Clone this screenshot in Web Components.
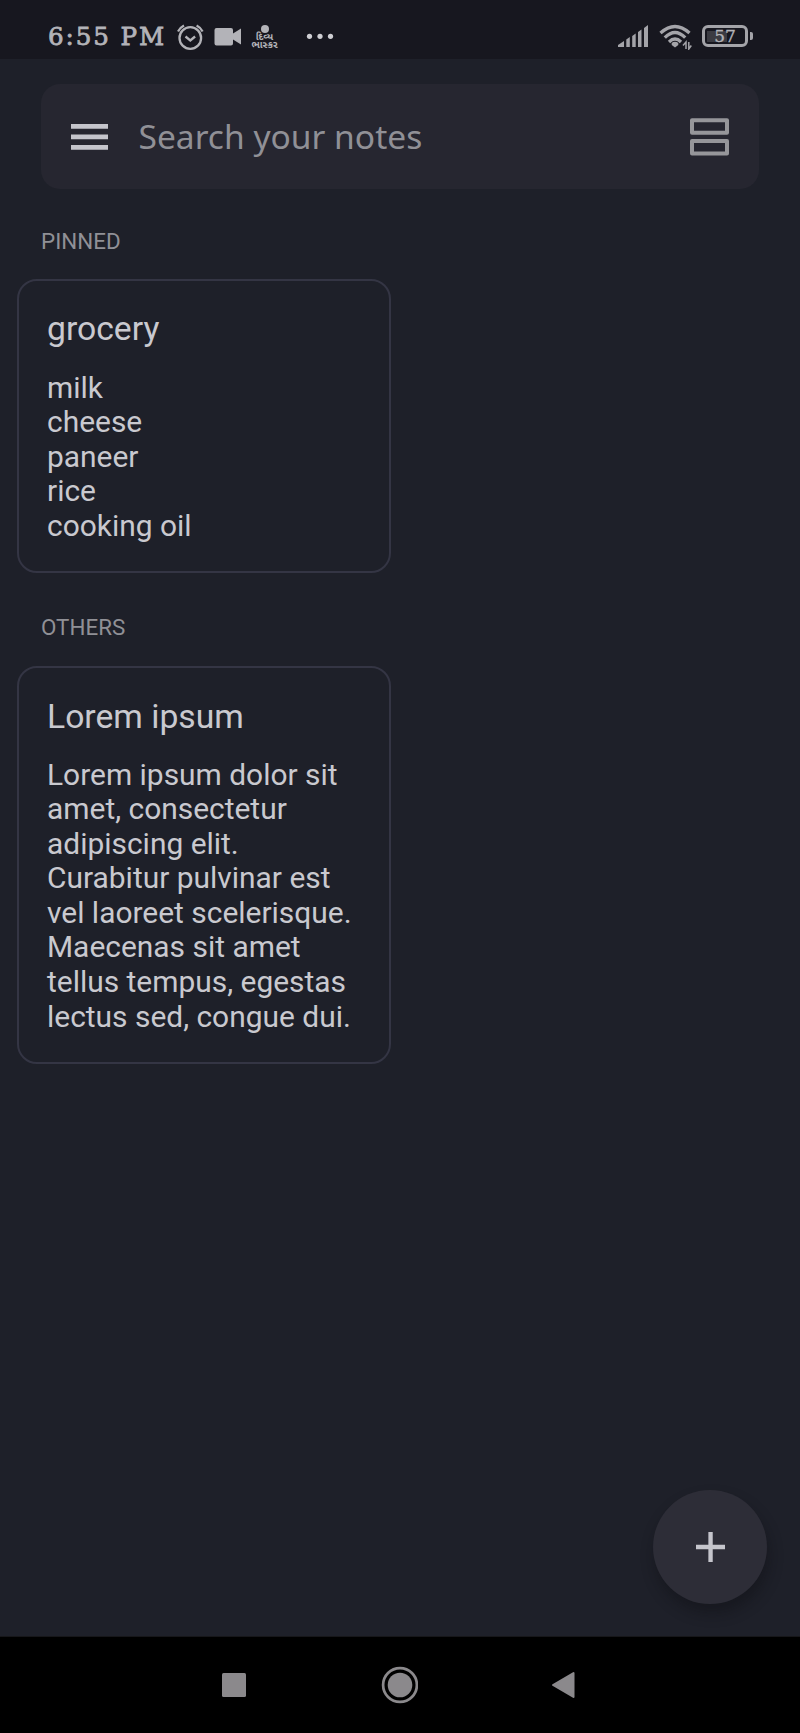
<!DOCTYPE html>
<html lang="en">
<head>
<meta charset="utf-8">
<title>Notes</title>
<style>
html,body{margin:0;background:#1e2029}
body{font-family:Roboto,sans-serif;color:#c9c9cf}
</style>
</head>
<body>
<notes-app></notes-app>
<script>
const define = (name, css, html) => customElements.define(name, class extends HTMLElement {
  constructor() {
    super();
    this.attachShadow({mode: 'open'}).innerHTML = `<style>*{box-sizing:border-box}svg{display:block;flex:none}${css}</style>${html}`;
  }
});

define('status-bar', `
:host{display:flex;box-sizing:border-box;height:59px;background:#17171f;color:#b3b3b8;padding:0 47px 0 48px;justify-content:space-between}
.side{display:flex;align-items:flex-start}
.time{font:24.600px/28px "DejaVu Serif",serif;letter-spacing:1.900px;-webkit-text-stroke:.8px currentColor;margin-top:22.500px;width:128px;white-space:nowrap}
.app{width:28px;margin:25px 0 0 8px;display:flex;flex-direction:column;align-items:center;text-align:center;font:700 9.600px/8px "Noto Sans Gujarati","Noto Sans",sans-serif;white-space:nowrap}
.app i{width:8px;height:8px;border-radius:50%;background:currentColor;flex:none;margin-bottom:1px}
.bat{display:flex;align-items:center;margin:25px 0 0 10px}
.cell{width:46px;height:22px;border:3px solid #a4a4a9;border-radius:6px;display:flex;align-items:center;justify-content:center;font:17px/16px "DejaVu Serif",serif;-webkit-text-stroke:.3px currentColor;background:linear-gradient(#3b3b42,#3b3b42) 2px 3px/20px 11px no-repeat}
.tip{width:3px;height:8px;background:#a4a4a9;margin-left:2px;border-radius:0 2px 2px 0}
`, `
<div class="side">
 <div class="time">6:55 PM</div>
 <svg style="margin:24px 0 0 1px" width="28" height="28" viewBox="0 0 28 28" fill="none" stroke="currentColor" stroke-width="2.3"><circle cx="13.3" cy="14" r="10.8"/><path d="M8.500 12.500l4.800 4 4.800-4M1 7.500Q3 3.500 7 1.500M25.600 7.500Q23.600 3.500 19.600 1.500"/></svg>
 <svg style="margin:27px 0 0 8.500px" width="29" height="20" viewBox="0 0 29 20" fill="currentColor"><path d="M2.500 1h14.500q2 0 2 2v3.500L27 1.500v16l-8-5v4q0 2-2 2H2.500q-2 0-2-2V3q0-2 2-2z"/></svg>
 <div class="app"><i></i><span>દિવ્ય<br>ભાસ્કર</span></div>
 <svg style="margin:32px 0 0 27.500px" width="30" height="9" viewBox="0 0 30 9" fill="#cfcfd3"><circle cx="3.500" cy="4.300" r="2.600"/><circle cx="14" cy="4.300" r="2.600"/><circle cx="24.500" cy="4.300" r="2.600"/></svg>
</div>
<div class="side">
 <svg style="margin-top:25px" width="31" height="23" viewBox="0 0 31 23" fill="#a4a4a9"><path d="M0 22v-2l6-4v6zM8.300 22v-7.500l3.500-2.500v10zM14.200 22v-11l3.500-2.500V22zM20 22V7l3.500-2.500V22zM26 22V3l4-3v22z"/></svg>
 <svg style="margin:24px 0 0 10px" width="33" height="26" viewBox="0 0 33 26" fill="none" stroke="#a4a4a9" stroke-width="3.300"><path d="M1.500 9Q16 -4 30.500 9M5.800 13.700Q16 3.500 26.200 13.700M10 18Q16 12 22 18"/><path fill="#a4a4a9" stroke="none" d="M16 17.800q2 0 3.300 1.300v2L16 23.600l-3.300-2.500v-2q1.300-1.300 3.300-1.300z"/><path stroke-width="1.500" d="M27 25v-7l-3 3.500M29.800 18v7l2.500-3.500"/></svg>
 <div class="bat"><div class="cell">57</div><div class="tip"></div></div>
</div>`);

define('search-bar', `
:host{display:flex;box-sizing:border-box;align-items:center;height:105px;margin:25px 41px 0;padding:0 30px;background:#262630;border-radius:19px}
.hint{flex:1;margin:-1px 0 0 30.500px;font:33.550px/46px "Noto Sans",sans-serif;color:#909096;white-space:nowrap}
`, `
<svg width="37" height="26" viewBox="0 0 37 26" fill="#c5c5cc"><path d="M0 0h37v4.800H0zM0 10.500h37v4.800H0zM0 21h37v4.800H0z"/></svg>
<div class="hint"><slot></slot></div>
<svg width="39" height="38" viewBox="0 0 39 38" fill="none" stroke="#96969a" stroke-width="4" stroke-linejoin="round"><path d="M2 2.300h35v12.500H2zM2 23h35v12.500H2z"/></svg>`);

define('section-label', `
:host{display:block;padding-left:41px;font:22.400px/26px Roboto,sans-serif;color:#909096}
`, `<slot></slot>`);

define('note-card', `
:host{display:block;box-sizing:border-box;width:374.500px;margin-left:16.500px;border:2px solid #343544;border-radius:20px;padding:var(--title-top) 20px 0 28.500px}
.title{font-size:33.700px;line-height:40px;color:#c9c9cf}
.body{font-size:29.930px;line-height:34.600px;white-space:pre-line;margin-top:calc(49.500px - var(--title-top))}
`, `<div class="title"><slot name="title"></slot></div><div class="body"><slot></slot></div>`);

define('add-button', `
:host{display:flex;align-items:center;justify-content:center;width:114px;height:114px;border-radius:50%;background:#2d2d37;box-shadow:2px 9px 14px rgba(15,15,20,.42)}
`, `<svg width="29" height="30" viewBox="0 0 30 30" preserveAspectRatio="none" fill="#c5c5cc"><path d="M12.800 0h4.500v12.800H30v4.400H17.300V30h-4.500V17.200H0v-4.400h12.800z"/></svg>`);

define('nav-bar', `
:host{display:flex;box-sizing:border-box;height:97px;background:#000;padding:0 225px 0 222px;align-items:center;justify-content:space-between;border-top:1px solid #17171a}
`, `
<svg width="24" height="24"><rect width="24" height="24" rx="1.500" fill="#8b898c"/></svg>
<svg width="38" height="38" viewBox="0 0 38 38"><circle cx="20" cy="19" r="16.900" fill="none" stroke="#8b898c" stroke-width="2.700"/><circle cx="20" cy="19" r="12.300" fill="#8b898c"/></svg>
<svg width="24" height="28" viewBox="0 0 24 28"><path d="M22.500 2v24L2 14z" fill="#8b898c" stroke="#8b898c" stroke-width="2" stroke-linejoin="round"/></svg>`);

define('notes-app', `
:host{display:flex;flex-direction:column;width:800px;height:1733px;background:#1e2029;overflow:hidden}
.l1{margin-top:39px}.l2{margin-top:41px}
.c1{margin-top:25px;height:294px;--title-top:28px}.c2{margin-top:26px;height:398px;--title-top:29px}
add-button{margin:auto 33px 32px auto;flex:none}
status-bar,search-bar,nav-bar,section-label,note-card{flex:none}
`, `
<status-bar></status-bar>
<search-bar>Search your notes</search-bar>
<section-label class="l1">PINNED</section-label>
<note-card class="c1"><span slot="title">grocery</span>milk
cheese
paneer
rice
cooking oil</note-card>
<section-label class="l2">OTHERS</section-label>
<note-card class="c2"><span slot="title">Lorem ipsum</span>Lorem ipsum dolor sit
amet, consectetur
adipiscing elit.
Curabitur pulvinar est
vel laoreet scelerisque.
Maecenas sit amet
tellus tempus, egestas
lectus sed, congue dui.</note-card>
<add-button></add-button>
<nav-bar></nav-bar>`);
</script>
</body>
</html>
